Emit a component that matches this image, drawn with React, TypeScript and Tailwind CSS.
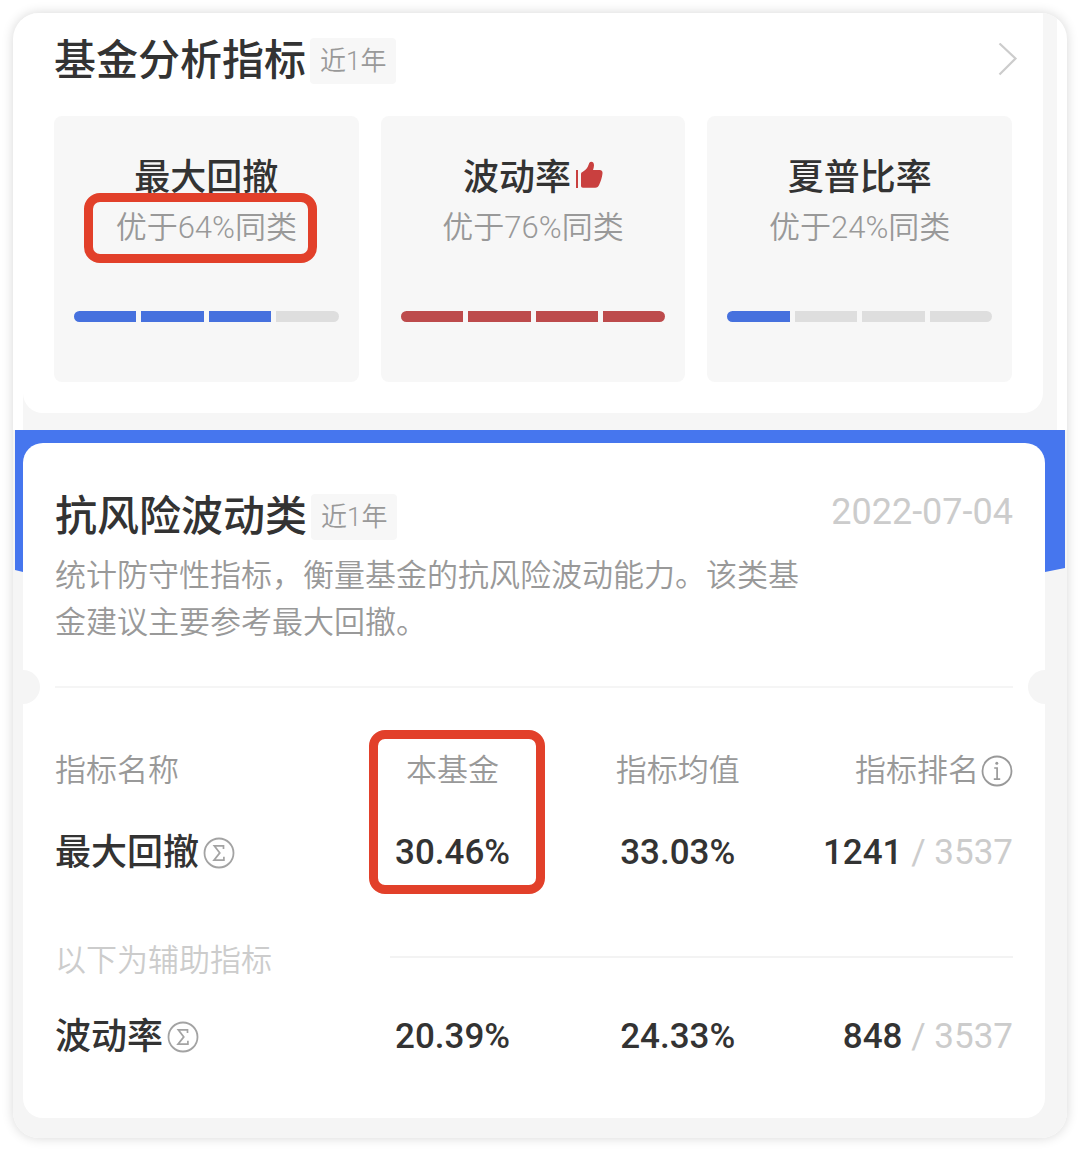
import React from 'react';
import clsx from 'clsx';

interface Indicator {
  name: string;
  better: string;
  level: number;
  color: string;
  liked?: boolean;
  marked?: boolean;
}

interface RiskRow {
  name: string;
  fund: string;
  average: string;
  rank: string;
  total: string;
}

const indicators: Indicator[] = [
  { name: '最大回撤', better: '优于64%同类', level: 3, color: 'bg-[#4671de]', marked: true },
  { name: '波动率', better: '优于76%同类', level: 4, color: 'bg-[#bd4b4c]', liked: true },
  { name: '夏普比率', better: '优于24%同类', level: 1, color: 'bg-[#4671de]' },
];

const mainRow: RiskRow = { name: '最大回撤', fund: '30.46%', average: '33.03%', rank: '1241', total: '3537' };
const extraRow: RiskRow = { name: '波动率', fund: '20.39%', average: '24.33%', rank: '848', total: '3537' };

const ThumbIcon = () => (
  <svg className="mb-1.5 w-7 h-7 shrink-0" viewBox="0 0 28 28" aria-hidden="true">
    <path d="M2 9v18" stroke="#c9403f" strokeWidth="2" fill="none" />
    <path
      d="M6 13c0-1 .6-1.700 1.500-2.100 3-1.500 5-3.900 6.200-7.400C14.200 1.900 14.900.8 16.200.8c1.900 0 2.900 1.600 2.800 3.600-.1 1.600-.4 3.100-1 4.600h6.600c2.100 0 3.200 1.500 2.900 3.400-.5 3.900-1.600 7.700-3.300 11.400-.8 1.900-2 3-4 3H8c-1.300 0-2-.7-2-2z"
      fill="#c9403f"
    />
  </svg>
);

const SigmaIcon = () => (
  <svg className="w-8 h-8" viewBox="0 0 32 32" fill="none" stroke="#a3a3a3" aria-hidden="true">
    <circle cx="16" cy="16" r="14.500" strokeWidth="1.800" />
    <path d="M20.500 12V8.800H11.300L16.800 15.900 11 23.200H20.900V19.800" strokeWidth="1.700" />
  </svg>
);

const InfoIcon = () => (
  <svg className="w-8 h-8" viewBox="0 0 32 32" fill="none" stroke="#999999" aria-hidden="true">
    <circle cx="16" cy="16" r="14.500" strokeWidth="1.800" />
    <circle cx="15.800" cy="8.300" r="1.500" fill="#999999" stroke="none" />
    <path d="M13.200 13h2.900v11M12.800 24.200h6.400" strokeWidth="1.700" />
  </svg>
);

const PeriodBadge = () => (
  <span className="ml-1 h-[46px] px-2.5 flex items-center rounded-sm bg-[#f7f7f7] text-[26px] font-[350] text-[#999999]">
    近1年
  </span>
);

const IndicatorTile: React.FC<{ item: Indicator }> = ({ item }) => (
  <div className="rounded-lg bg-[#f7f7f7] px-5 pt-[37px] pb-[60px]">
    <h3 className="flex items-center justify-center gap-1 text-[36px] leading-[50px] font-medium text-[#333333]">
      {item.name}
      {item.liked && <ThumbIcon />}
    </h3>
    <p className="text-center text-[31px] leading-[50px] font-[350] text-[#999999]">
      <span className="relative inline-block">
        {item.better}
        {item.marked && (
          <span className="absolute -left-8 -right-5 -top-2.5 -bottom-2.5 rounded-2xl border-[9px] border-[#e2402a]" />
        )}
      </span>
    </p>
    <div className="mt-[58px] flex gap-[5px] rounded-full overflow-hidden">
      {[0, 1, 2, 3].map((step) => (
        <span key={step} className={clsx('h-[11px] flex-1', step < item.level ? item.color : 'bg-[#dedede]')} />
      ))}
    </div>
  </div>
);

const RiskTableRow: React.FC<{ row: RiskRow }> = ({ row }) => (
  <tr className="h-[82px] text-[35px] font-medium text-[#333333]">
    <th scope="row" className="p-0 font-medium">
      <div className="flex items-center text-[36px]">
        {row.name}
        <button type="button" aria-label={`${row.name}说明`} className="ml-1">
          <SigmaIcon />
        </button>
      </div>
    </th>
    <td className="p-0 text-center">{row.fund}</td>
    <td className="p-0 text-center">{row.average}</td>
    <td className="p-0 text-right whitespace-nowrap">
      {row.rank}
      <span className="font-normal text-[#cccccc]"> / {row.total}</span>
    </td>
  </tr>
);

export default function App() {
  return (
    <div className="min-h-screen bg-white p-[13px] font-['Roboto','Noto_Sans_CJK_SC',sans-serif]">
      <main className="overflow-hidden rounded-[26px] bg-white shadow-[0_0_12px_rgba(0,0,0,0.16)]">
        {/* Analysis indicators */}
        <div className="mx-2.5 bg-[#f6f6f6] pr-3.5 pb-[17px]">
          <section className="rounded-b-[20px] bg-white px-[31px] pt-[25px] pb-[31px]">
            <div className="flex items-center">
              <h2 className="text-[42px] leading-[46px] font-medium text-[#333333]">基金分析指标</h2>
              <PeriodBadge />
              <button type="button" aria-label="查看更多" className="ml-auto -mr-1.5">
                <svg className="w-5 h-9" viewBox="0 0 20 36" fill="none" aria-hidden="true">
                  <path d="M1.500 0.500 17.500 15.500 1.500 31.500" stroke="#cccccc" strokeWidth="2.200" />
                </svg>
              </button>
            </div>
            <div className="mt-8 grid grid-cols-3 gap-[22px]">
              {indicators.map((item) => (
                <IndicatorTile key={item.name} item={item} />
              ))}
            </div>
          </section>
        </div>

        {/* Risk resistance */}
        <div className="relative bg-[#f5f5f5] pt-[13px] pr-[22px] pb-5 pl-2.5">
          <div className="absolute inset-x-0.5 top-0 h-[142px] bg-[#4676ee] [clip-path:polygon(0_0,100%_0,100%_138px,calc(100%-20px)_142px,8px_142px,0_140px)]" />
          <section className="relative rounded-[20px] bg-white px-8 pt-[51px] pb-10">
            <div className="flex items-start">
              <h2 className="text-[42px] leading-[46px] font-medium text-[#333333]">抗风险波动类</h2>
              <PeriodBadge />
              <time dateTime="2022-07-04" className="ml-auto text-[36px] leading-9 text-[#cccccc]">
                2022-07-04
              </time>
            </div>
            <p className="mt-3 max-w-[760px] text-[31px] leading-[47px] font-[350] text-[#999999]">
              统计防守性指标，衡量基金的抗风险波动能力。该类基金建议主要参考最大回撤。
            </p>

            {/* Ticket style divider */}
            <div className="relative mt-10 h-0.5 bg-[#f5f5f5]">
              <span className="absolute -left-[49px] -top-4 size-[34px] rounded-full bg-[#f5f5f5]" />
              <span className="absolute -right-[49px] -top-4 size-[34px] rounded-full bg-[#f5f5f5]" />
            </div>

            <table className="mt-[42px] w-full table-fixed text-left">
              <colgroup>
                <col className="w-[30%]" />
                <col className="w-[23%]" />
                <col className="w-[24%]" />
                <col className="w-[23%]" />
              </colgroup>
              <thead>
                <tr className="h-[82px] text-[31px] text-[#999999]">
                  <th scope="col" className="p-0 font-[350]">指标名称</th>
                  <th scope="col" className="relative p-0 text-center font-[350]">
                    本基金
                    <span className="absolute left-[27px] right-[18px] top-0 h-[164px] rounded-2xl border-[9px] border-[#e2402a]" />
                  </th>
                  <th scope="col" className="p-0 text-center font-[350]">指标均值</th>
                  <th scope="col" className="p-0 font-[350]">
                    <div className="flex items-center justify-end">
                      指标排名
                      <button type="button" aria-label="指标排名说明" className="ml-0.5">
                        <InfoIcon />
                      </button>
                    </div>
                  </th>
                </tr>
              </thead>
              <tbody>
                <RiskTableRow row={mainRow} />
                <tr className="h-[102px]">
                  <td className="p-0 pt-8 text-[31px] font-[350] text-[#cccccc]">以下为辅助指标</td>
                  <td colSpan={3} className="p-0 pt-6 pl-12">
                    <div className="h-0.5 bg-[#f3f3f3]" />
                  </td>
                </tr>
                <RiskTableRow row={extraRow} />
              </tbody>
            </table>
          </section>
        </div>
      </main>
    </div>
  );
}
